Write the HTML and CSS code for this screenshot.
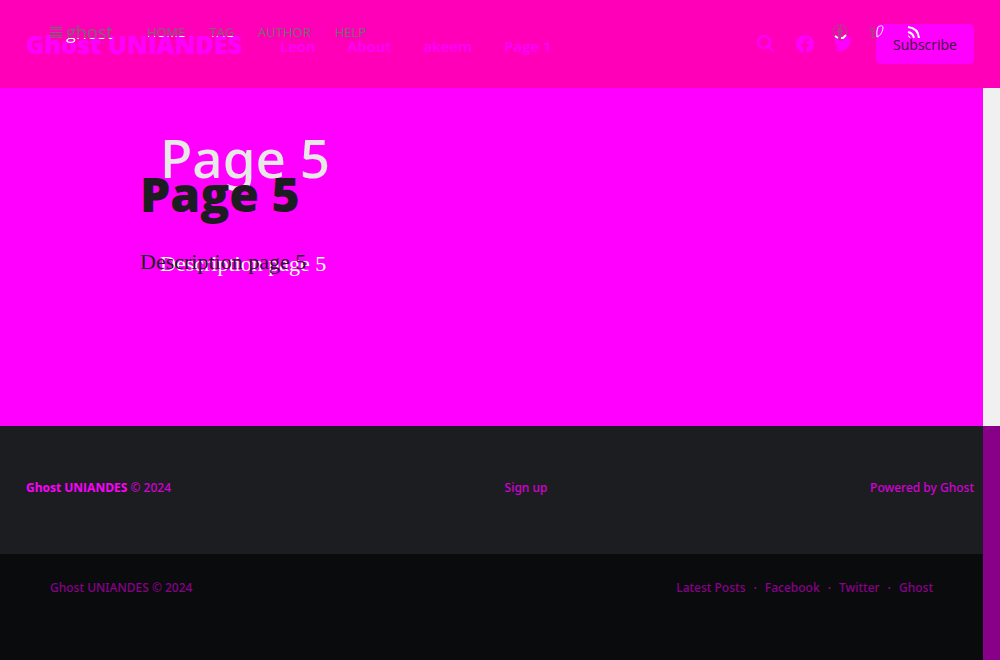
FILE: index.html
```html
<!DOCTYPE html>
<html lang="en">
<head>
<meta charset="utf-8">
<title>Page 5</title>
<link rel="stylesheet" href="styles.css">
</head>
<body>
<header class="site-header">
  <a class="brand" href="#">Ghost UNIANDES</a>
  <nav class="main-nav">
    <a href="#">Leon</a><a href="#">About</a><a href="#">akeem</a><a href="#">Page 1</a>
  </nav>
  <div class="actions">
    <button class="icon-button" aria-label="Search"><svg width="20" height="20" viewBox="0 0 20 20" fill="none" stroke="currentColor" stroke-width="2"><circle cx="8" cy="8" r="6"/><path d="M12.500 12.500l5 5"/></svg></button>
    <a class="icon-button" href="#" aria-label="Facebook"><svg width="18" height="18" viewBox="0 0 24 24" fill="currentColor"><path d="M24 12a12 12 0 1 0-13.900 11.900v-8.400H7.100V12h3V9.400c0-3 1.800-4.700 4.500-4.700 1.300 0 2.700.2 2.700.2v3h-1.500c-1.500 0-1.900.9-1.900 1.900V12h3.300l-.5 3.500h-2.800v8.400A12 12 0 0 0 24 12z"/></svg></a>
    <a class="icon-button" href="#" aria-label="Twitter"><svg width="18" height="18" viewBox="0 0 24 24" fill="currentColor"><path d="M24 4.600a10 10 0 0 1-2.800.8 5 5 0 0 0 2.100-2.700 10 10 0 0 1-3.100 1.200 4.900 4.900 0 0 0-8.400 4.500A14 14 0 0 1 1.700 3.100a4.900 4.900 0 0 0 1.500 6.600 5 5 0 0 1-2.200-.6 4.900 4.900 0 0 0 3.900 4.900 5 5 0 0 1-2.200.1 4.900 4.900 0 0 0 4.600 3.400A10 10 0 0 1 0 19.500a14 14 0 0 0 21.500-12.400A10 10 0 0 0 24 4.600z"/></svg></a>
    <button class="subscribe">Subscribe</button>
  </div>
</header>
<div class="overlay-bar">
  <nav class="overlay-nav">
    <a class="overlay-brand" href="#"><svg width="12" height="11" viewBox="0 0 12 11" fill="none" stroke="currentColor"><path d="M0 .5h12M0 2.500h12M0 5.500h12M0 8.500h5v2H0zM7 8.500h5v2H7z"/></svg><span class="two-tone">ghost</span></a>
    <a class="two-tone" href="#">HOME</a><a class="two-tone" href="#">TAG</a><a href="#">AUTHOR</a><a href="#">HELP</a>
  </nav>
  <div class="overlay-icons">
    <svg width="16" height="16" viewBox="0 0 16 16" fill="none" stroke="#6f706a"><circle cx="8" cy="8" r="7" stroke-dasharray="2 1"/><path d="M7 13V5q0-2 3-2M9 13V5M5 7h2M9 7h2" /><path d="M3 12l3 2M9 14h2l3-3" stroke="#fff" stroke-width="2"/></svg>
    <svg width="16" height="16" viewBox="0 0 16 16" fill="none"><path d="M1 2l2 2v2l-2 1 3 1v2l-2 1 2 1v2H1M5 3v11" stroke="#6f706a" stroke-dasharray="2 1"/><path d="M9 3q5-3 5 1-1 7-6 9-1-5 1-10z" stroke="#fff"/></svg>
    <svg width="16" height="16" viewBox="0 0 16 16" fill="none" stroke="#fff"><path d="M2 3q10 1 11 11M2 8q5 1 6 6" stroke-width="2"/><path d="M2 12h1l1 2"/></svg>
  </div>
</div>
<main class="content">
  <article class="page">
    <div class="page-shade" aria-hidden="true"><div class="shade-title">Page 5</div><div class="shade-text">Description page 5</div></div>
    <div class="page-text">
      <h1>Page 5</h1>
      <p>Description page 5</p>
    </div>
  </article>
  <div class="gutter"></div>
</main>
<footer class="footers">
  <div class="footer-stack">
    <div class="footer-main">
      <div><strong>Ghost UNIANDES</strong> © 2024</div>
      <a class="sign-up" href="#">Sign up</a>
      <a class="powered" href="#">Powered by Ghost</a>
    </div>
    <div class="footer-base">
      <div>Ghost UNIANDES © 2024</div>
      <nav class="footer-links"><a href="#">Latest Posts</a><a href="#">Facebook</a><a href="#">Twitter</a><a href="#">Ghost</a></nav>
    </div>
  </div>
  <div class="gutter gutter-dark"></div>
</footer>
</body>
</html>
```
FILE: styles.css
```css
* { box-sizing: border-box; }
body { margin: 0; min-height: 100vh; display: flex; flex-direction: column; background: #ff00ff; font-family: "Open Sans", sans-serif; position: relative; }
a { color: inherit; text-decoration: none; }
button { border: 0; font: inherit; color: inherit; padding: 0; background: none; }
svg { display: block; }
.site-header { height: 88px; padding: 0 26px; display: flex; align-items: center; background: #ff00b8; color: #ff00ff; }
.brand { font-size: 25px; font-weight: 800; white-space: nowrap; }
.main-nav { display: flex; gap: 32px; margin-left: 38px; padding-top: 4px; font-size: 15px; font-weight: 600; white-space: nowrap; }
.actions { margin-left: auto; display: flex; align-items: center; gap: 20px; }
.icon-button { display: block; }
.subscribe { margin-left: 4px; width: 98px; height: 40px; border-radius: 5px; background: #ff00ff; color: #35143b; font-size: 14px; font-weight: 500; }
.overlay-bar { position: absolute; top: 24px; left: 50px; right: 78px; display: flex; justify-content: space-between; }
.overlay-nav { display: flex; gap: 24px; align-items: center; height: 16px; font-size: 13px; line-height: 18px; color: #6f706a; }
.overlay-brand { display: flex; gap: 4px; align-items: center; margin-right: 10px; font-size: 18px; line-height: 24px; }
.two-tone { color: transparent; background: linear-gradient(#6f706a 75%, #fff 75%); -webkit-background-clip: text; background-clip: text; }
.overlay-icons { display: flex; gap: 21px; }
.content, .footers { display: flex; }
.content { flex: 1; }
.page { flex: 1; position: relative; padding: 74px 140px 0; color: #1c1d21; }
.page-text { position: relative; }
h1 { margin: 0; font-size: 48px; font-weight: 800; line-height: 64px; }
.page p { margin: 22px 0 0; font: 22px/28px "Liberation Serif", serif; }
.page-shade { position: absolute; left: 160px; top: 36px; color: #e8e8e8; }
.shade-title { font-family: "Noto Sans", sans-serif; font-size: 53px; font-weight: 500; line-height: 68px; }
.shade-text { margin-top: 58px; font: 22px/28px "Liberation Serif", serif; color: #fff; }
.gutter { width: 17px; background: #f0f0f0; }
.gutter-dark { background: #870087; }
.footer-stack { flex: 1; font-family: "Noto Sans", sans-serif; font-size: 12px; font-weight: 500; line-height: 20px; }
.footer-main { height: 128px; padding: 52px 9px 0 26px; display: grid; grid-template-columns: 1fr auto 1fr; background: #1c1d21; color: #d500d5; }
.footer-main strong { color: #ff00ff; font-family: "Open Sans", sans-serif; }
.sign-up { padding-left: 52px; }
.powered { text-align: right; }
.footer-base { height: 106px; padding: 24px 50px 0; display: flex; justify-content: space-between; background: #0a0b0d; color: #8b008b; }
.footer-links { display: flex; }
.footer-links a + a::before { content: "·"; margin: 0 8px; font-weight: 700; }
```
